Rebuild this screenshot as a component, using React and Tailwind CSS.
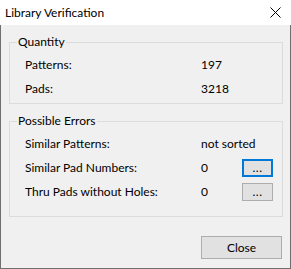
import React from "react";

function Row({ label, value, button, focused }) {
  return (
    <div className="grid grid-cols-[176px_41px_31px] h-[24px] items-center whitespace-nowrap">
      <span>{label}</span>
      <span>{value}</span>
      {button ? (
        <div
          className={
            focused
              ? "h-[18px] w-[31px] border-2 border-[#0078d7] bg-[#e1e1e1] flex items-center justify-center leading-none"
              : "h-[18px] w-[31px] border border-[#adadad] bg-[#e1e1e1] flex items-center justify-center leading-none"
          }
        >
          <span className="tracking-[0.5px]">...</span>
        </div>
      ) : (
        <span />
      )}
    </div>
  );
}

export default function App() {
  return (
    <div className="w-[291px] h-[269px] flex flex-col bg-[#f0f0f0] font-['Lato',sans-serif] text-[12px] leading-[16px] text-black">
      <div className="h-[25px] shrink-0 bg-white flex items-center justify-between pl-[5px] pr-[10px]">
        <span className="text-[12px]">Library Verification</span>
        <svg width="11" height="11" viewBox="0 0 11 11">
          <path d="M0.5 0.5 L10.5 10.5 M10.5 0.5 L0.5 10.5" stroke="#000" strokeWidth="1" fill="none" />
        </svg>
      </div>
      <div className="flex-1 flex flex-col border-x border-b border-[#6f6f6f] pl-[8px] pr-[7px]">
        <fieldset className="mt-[9px] border border-[#dcdcdc]">
          <legend className="ml-[7px] px-[1px]">Quantity</legend>
          <div className="pl-[15px] pt-[3px] pb-[2px]">
            <Row label="Patterns:" value="197" />
            <Row label="Pads:" value="3218" />
          </div>
        </fieldset>
        <fieldset className="mt-[9px] border border-[#dcdcdc]">
          <legend className="ml-[7px] px-[1px]">Possible Errors</legend>
          <div className="pl-[15px] pt-[3px] pb-[12px]">
            <Row label="Similar Patterns:" value="not sorted" />
            <Row label="Similar Pad Numbers:" value="0" button focused />
            <Row label="Thru Pads without Holes:" value="0" button />
          </div>
        </fieldset>
        <div className="flex justify-end mt-[19px] pr-[1px]">
          <button className="w-[81px] h-[23px] border border-[#adadad] bg-[#e1e1e1] flex items-center justify-center">
            Close
          </button>
        </div>
      </div>
    </div>
  );
}
